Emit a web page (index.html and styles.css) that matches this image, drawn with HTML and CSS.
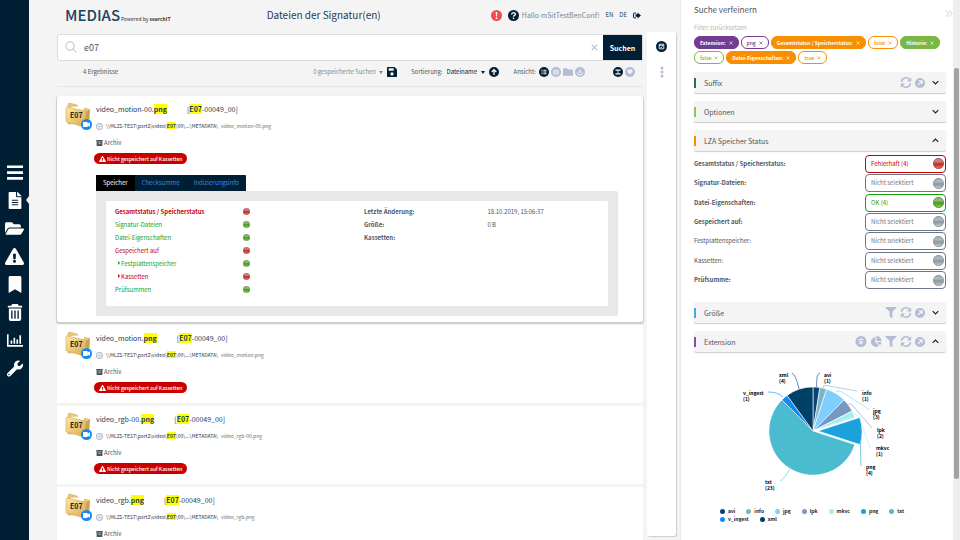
FILE: index.html
```html
<!DOCTYPE html>
<html lang="de">
<head>
  <meta charset="UTF-8" />
  <title>MEDIAS | Dateien der Signatur(en)</title>
  <meta name="viewport" content="width=device-width, initial-scale=1.0" />
  <link rel="stylesheet" href="styles.css">
</head>
<body>

  <!-- icon sprite -->
  <svg class="sprite" aria-hidden="true">
    <defs>
      <linearGradient id="folderFill" x1="0" y1="0" x2="1" y2="1">
        <stop offset="0" stop-color="#fbe8a6" /><stop offset="1" stop-color="#dba94a" />
      </linearGradient>
      <linearGradient id="redBall" x1="0" y1="0" x2="0" y2="1">
        <stop offset="0" stop-color="#c27a78" /><stop offset=".3" stop-color="#cf8080" /><stop offset=".55" stop-color="#bb2c28" /><stop offset="1" stop-color="#ee7a68" />
      </linearGradient>
      <linearGradient id="greenBall" x1="0" y1="0" x2="0" y2="1">
        <stop offset="0" stop-color="#7fa870" /><stop offset=".3" stop-color="#8fbf78" /><stop offset=".55" stop-color="#45981c" /><stop offset="1" stop-color="#86d850" />
      </linearGradient>
      <linearGradient id="greyBall" x1="0" y1="0" x2="0" y2="1">
        <stop offset="0" stop-color="#9aa4ab" /><stop offset=".3" stop-color="#b2bbc2" /><stop offset=".55" stop-color="#8b979f" /><stop offset="1" stop-color="#c2ccd4" />
      </linearGradient>
    </defs>
    <symbol id="bars" viewBox="0 0 16 16"><path d="M0 1h16v2.600H0zM0 6.800h16v2.600H0zM0 12.600h16v2.600H0z" /></symbol>
    <symbol id="file" viewBox="0 0 384 512"><path fill-rule="evenodd" d="M224 136V0H24C10.700 0 0 10.700 0 24v464c0 13.300 10.700 24 24 24h336c13.300 0 24-10.700 24-24V160H248c-13.200 0-24-10.800-24-24zM96 230h192v36H96zM96 298h192v36H96zM96 366h192v36H96zM384 122v6H256V0h6c6 0 12 2 17 7l98 98c4 4 7 11 7 17z" /></symbol>
    <symbol id="folderOpen" viewBox="0 0 576 512"><path d="M573 292l-73 124a64 64 0 0 1-55 32H45c-19 0-30-20-21-36l73-124a64 64 0 0 1 55-32h400c19 0 30 20 21 36zM152 224h328v-48c0-26-21-48-48-48H272l-64-64H48C21 64 0 85 0 112v278l69-118c17-30 49-48 83-48z" /></symbol>
    <symbol id="warning" viewBox="0 0 576 512"><path d="M569.500 440C588 472 565 512 528 512H48c-37 0-60-40-41.500-72L246.400 24c18.500-32 64.700-32 83.200 0zM288 354a46 46 0 1 0 0 92 46 46 0 0 0 0-92zm-43.700-165.300l7.400 136c.4 6.300 5.700 11.300 12 11.300h48.600c6.300 0 11.600-5 12-11.300l7.400-136c.4-6.900-5-12.700-12-12.700h-63.400c-6.900 0-12.300 5.800-12 12.700z" /></symbol>
    <symbol id="bookmark" viewBox="0 0 384 512"><path d="M0 512V48C0 21 21 0 48 0h288c26 0 48 21 48 48v464L192 400z" /></symbol>
    <symbol id="trash" viewBox="0 0 16 18"><path fill-rule="evenodd" d="M5 0h6l1 1.800h3.600v2H.4v-2H4zM1.500 4.800h13V16a2 2 0 0 1-2 2h-9a2 2 0 0 1-2-2zM4 7v8.500h1.400V7zm3.300 0v8.500h1.400V7zm3.300 0v8.500H12V7z" /></symbol>
    <symbol id="chart" viewBox="0 0 18 14"><path d="M0 0h1.800v12H18v1.900H0zM4 7h1.900v3.700H4zM7.300 4h1.900v6.700H7.300zM10.600 6h1.900v4.700h-1.900zM13.900 1h1.900v9.700h-1.900z" /></symbol>
    <symbol id="wrench" viewBox="0 0 512 512"><path d="M507.700 109c-2.200-9-13.500-12-20-5.500L413.300 178l-68-11.300-11.300-68 74.400-74.300c6.600-6.600 3.400-18-5.700-20.200-47.400-11.700-99.500 1-136.600 38-39.600 39.600-50.500 97-34 147.200L18.700 402.800a64 64 0 0 0 90.500 90.500L322.500 280c50 16.700 107.400 5.700 147.300-34.200 37-37 49.700-89.300 37.900-136.800zM64 472a24 24 0 1 1 0-48 24 24 0 0 1 0 48z" /></symbol>
    <symbol id="filter" viewBox="0 0 512 512"><path d="M488 0H24C3 0-8 26 7 41l185 185v206c0 8 4 15 10 20l80 56c16 11 38 0 38-20V226L505 41c15-15 4-41-17-41z" /></symbol>
    <symbol id="sync" viewBox="0 0 16 16"><path d="M1.400 7A6.700 6.700 0 0 1 12.800 3.200M14.600 9A6.700 6.700 0 0 1 3.200 12.800" fill="none" stroke="currentColor" stroke-width="2.200" /><path d="M15.500.5v6.200H9.300zM.5 15.500V9.300h6.200z" /></symbol>
    <symbol id="open" viewBox="0 0 16 16"><circle cx="8" cy="8" r="8" /><path d="M4.800 11.200L11 5M6 4.700h5.300V10" fill="none" stroke="#f4f4f4" stroke-width="2" /></symbol>
    <symbol id="down" viewBox="0 0 10 6"><path d="M1 1l4 4 4-4" fill="none" stroke="currentColor" stroke-width="1.500" /></symbol>
    <symbol id="up" viewBox="0 0 10 6"><path d="M1 5l4-4 4 4" fill="none" stroke="currentColor" stroke-width="1.500" /></symbol>
    <symbol id="pie" viewBox="0 0 16 16"><path d="M7 1.500V9l5.300 5.300A7.200 7.200 0 1 1 7 1.500zM8.700 0A7.300 7.300 0 0 1 16 7.300H8.700zM9 8.800h7a7.200 7.200 0 0 1-2.200 4.700z" /></symbol>
    <symbol id="bin" viewBox="0 0 16 16"><circle cx="8" cy="8" r="8" /><path d="M4 5.200h8M6.500 4h3" fill="none" stroke="#f4f4f4" stroke-width="1.200" /><path d="M4.800 6.800h6.400l-.6 5.200H5.400z" fill="#f4f4f4" opacity=".7" /></symbol>
    <symbol id="search" viewBox="0 0 12 12"><circle cx="5" cy="5" r="4.200" fill="none" stroke="currentColor" /><path d="M8 8l3.500 3.500" stroke="currentColor" /></symbol>
    <symbol id="close" viewBox="0 0 10 10"><path d="M1 1l8 8M9 1L1 9" fill="none" stroke="currentColor" stroke-width="1.500" /></symbol>
    <symbol id="alert" viewBox="0 0 12 12"><circle cx="6" cy="6" r="6" fill="#ef4b55" /><path d="M5.100 2.300h1.800l-.3 4.700H5.400z" fill="#fff" /><circle cx="6" cy="8.900" r="1" fill="#fff" /></symbol>
    <symbol id="help" viewBox="0 0 12 12"><circle cx="6" cy="6" r="6" /><path d="M4 4.800C4 2.300 8 2.300 8 4.600 8 6 6 6 6 7.300" fill="none" stroke="#fff" stroke-width="1.500" /><circle cx="6" cy="9.100" r=".9" fill="#fff" /></symbol>
    <symbol id="logout" viewBox="0 0 16 12"><path d="M9 0l7 6-7 6V8.500H5v-5h4z" /><path d="M6 1.200H2.500Q1 1.200 1 2.700v6.600q0 1.500 1.500 1.500H6" fill="none" stroke="currentColor" stroke-width="2" /></symbol>
    <symbol id="save" viewBox="0 0 12 12"><path fill-rule="evenodd" d="M1 0h8l3 3v8q0 1-1 1H1q-1 0-1-1V1q0-1 1-1zm1 1.500v3h6v-3zM6 6.300a2 2 0 1 0 0 4 2 2 0 0 0 0-4z" /></symbol>
    <symbol id="arrowUp" viewBox="0 0 12 12"><circle cx="6" cy="6" r="6" /><path d="M6 9.500V3.500M3.200 6L6 3.200 8.800 6" fill="none" stroke="#fff" stroke-width="1.500" /></symbol>
    <symbol id="list" viewBox="0 0 12 12"><circle cx="6" cy="6" r="6" /><path d="M3 3.900h1.300M5.300 3.900H9M3 6h1.300M5.300 6H9M3 8.100h1.300M5.300 8.100H9" stroke="#f4f4f4" stroke-width="1.200" /></symbol>
    <symbol id="grid" viewBox="0 0 12 12"><circle cx="6" cy="6" r="6" /><path d="M3 3.500h6v5H3zM3 6h6M5 3.500v5M7 3.500v5" fill="none" stroke="#f4f4f4" stroke-width=".8" /></symbol>
    <symbol id="folder" viewBox="0 0 12 9"><path d="M1 0h3.500L6 1.500h5q1 0 1 1V8q0 1-1 1H1Q0 9 0 8V1q0-1 1-1z" /></symbol>
    <symbol id="download" viewBox="0 0 12 12"><circle cx="6" cy="6" r="6" /><path d="M6 2.500v4M4.200 5L6 6.800 7.800 5M2.800 6.500a3.200 3.200 0 0 0 6.400 0" fill="none" stroke="#f4f4f4" stroke-width="1.200" /></symbol>
    <symbol id="hourglass" viewBox="0 0 12 12"><circle cx="6" cy="6" r="6" /><path d="M3 3h6v1.500H3zM3 7.500h6V9H3zM5 5.300h2v1.400H5z" fill="#fff" /></symbol>
    <symbol id="shield" viewBox="0 0 12 12"><circle cx="6" cy="6" r="6" /><path d="M3 3h6v3.500H8L6 9 4 6.500H3z" fill="#f4f4f4" /></symbol>
    <symbol id="calendar" viewBox="0 0 12 12"><circle cx="6" cy="6" r="6" /><path d="M3.500 3.500h5v5h-5zM3.500 4.700h5M4.800 6.500l.9.9 1.500-1.500" fill="none" stroke="#fff" stroke-width=".9" /></symbol>
    <symbol id="dots" viewBox="0 0 4 12"><circle cx="2" cy="2" r="1.500" /><circle cx="2" cy="6" r="1.500" /><circle cx="2" cy="10" r="1.500" /></symbol>
    <symbol id="goto" viewBox="0 0 12 12"><circle cx="6" cy="6" r="5" fill="none" stroke="currentColor" stroke-width="1.900" /><path d="M3 6h5M6 3.800L8.200 6 6 8.200" fill="none" stroke="currentColor" stroke-width="1.600" /></symbol>
    <symbol id="archive" viewBox="0 0 12 11"><path d="M0 0h12v3H0zM.7 3.700h10.600V11H.7zM4 5v1.200h4V5z" fill-rule="evenodd" /></symbol>
    <symbol id="collapse" viewBox="0 0 10 8"><path d="M1 0l4 4-4 4M5 0l4 4-4 4" fill="none" stroke="currentColor" /></symbol>
    <symbol id="signature" viewBox="0 0 28 30">
      <path d="M3 3l1-2 8 2 1 2 10 2q1 0 1 1v13L3 22z" fill="#e8c878" stroke="#cfa75a" stroke-width=".6" />
      <path d="M6 5l13-1v4L6 9z" fill="#fff" />
      <path d="M1 6q0-1 1-1l18 4q1 0 1 1l-1 14q0 1-1 1L2 20q-1 0-1-1z" fill="url(#folderFill)" stroke="#d3aa58" stroke-width=".6" />
      <path d="M21 10l4-3-1 13-4 4z" fill="#d0a050" />
      <circle cx="21.500" cy="22.500" r="5.500" fill="#1687f5" />
      <path d="M18 20h4.600v1.600l2.400-1.400v4.600l-2.400-1.400V25H18z" fill="#fff" />
    </symbol>
    <symbol id="red" viewBox="0 0 10 10"><circle cx="5" cy="5" r="4.700" fill="url(#redBall)" stroke="#8f3a3a" stroke-width=".6" /></symbol>
    <symbol id="green" viewBox="0 0 10 10"><circle cx="5" cy="5" r="4.700" fill="url(#greenBall)" stroke="#4d7a3a" stroke-width=".6" /></symbol>
    <symbol id="grey" viewBox="0 0 10 10"><circle cx="5" cy="5" r="4.700" fill="url(#greyBall)" stroke="#78838b" stroke-width=".6" /></symbol>
  </svg>

  <nav class="sidebar">
    <a href="#" aria-label="Menü"><svg><use href="#bars" /></svg></a>
    <a href="#" class="current" aria-label="Dateien"><svg><use href="#file" /></svg></a>
    <a href="#" aria-label="Ordner"><svg class="wide"><use href="#folderOpen" /></svg></a>
    <a href="#" aria-label="Fehler"><svg class="wide"><use href="#warning" /></svg></a>
    <a href="#" aria-label="Lesezeichen"><svg><use href="#bookmark" /></svg></a>
    <a href="#" aria-label="Papierkorb"><svg><use href="#trash" /></svg></a>
    <a href="#" aria-label="Statistik"><svg><use href="#chart" /></svg></a>
    <a href="#" aria-label="Werkzeuge"><svg><use href="#wrench" /></svg></a>
  </nav>

  <main class="main">
    <header class="header">
      <div class="logo"><strong>MEDIAS</strong><small>Powered by <b>searchIT</b></small></div>
      <h1>Dateien der Signatur(en)</h1>
      <div class="user">
        <svg class="ic-lg"><use href="#alert" /></svg>
        <svg class="ic-lg dark"><use href="#help" /></svg>
        <span class="hello">Hallo mSitTestBenConf!</span>
        <a href="#">EN</a>
        <a href="#">DE</a>
        <a href="#" aria-label="Abmelden"><svg class="ic-out"><use href="#logout" /></svg></a>
      </div>
    </header>

    <div class="content">
      <div class="center">
        <form class="search">
          <svg class="ic-search"><use href="#search" /></svg>
          <input type="text" value="e07" aria-label="Suchbegriff" />
          <button type="button" class="clear" aria-label="Leeren"><svg><use href="#close" /></svg></button>
          <button type="button" class="submit">Suchen</button>
        </form>

        <div class="toolbar">
          <span class="count">4 Ergebnisse</span>
          <button type="button" class="saved">0 gespeicherte Suchen <i class="caret"></i></button>
          <button type="button" class="dark" aria-label="Speichern"><svg class="ic"><use href="#save" /></svg></button>
          <label class="sort-label" for="sort">Sortierung:</label>
          <select id="sort"><option>Dateiname</option></select><i class="caret dark"></i>
          <button type="button" class="dark sort-dir" aria-label="Aufsteigend"><svg class="ic"><use href="#arrowUp" /></svg></button>
          <span class="view-label">Ansicht:</span>
          <div class="views">
            <button type="button" class="dark" aria-label="Liste"><svg class="ic"><use href="#list" /></svg></button>
            <button type="button" aria-label="Tabelle"><svg class="ic"><use href="#grid" /></svg></button>
            <button type="button" aria-label="Ordner"><svg class="ic"><use href="#folder" /></svg></button>
            <button type="button" aria-label="Download"><svg class="ic"><use href="#download" /></svg></button>
          </div>
          <div class="views last">
            <button type="button" class="dark" aria-label="Wartend"><svg class="ic"><use href="#hourglass" /></svg></button>
            <button type="button" aria-label="Geschützt"><svg class="ic"><use href="#shield" /></svg></button>
          </div>
        </div>

        <div class="results">
          <article class="card open">
            <div class="thumb"><svg><use href="#signature" /></svg><span>E07</span></div>
            <div class="info">
              <h2><a href="#">video_motion-00.<mark>png</mark></a><a href="#">[<mark>E07</mark>-00049_00]</a></h2>
              <p class="path"><svg><use href="#goto" /></svg><a href="#">\\MLZS-TEST\part2\video\<mark>E07</mark>\00\...\METADATA\</a> video_motion-00.png</p>
              <p class="archive"><svg><use href="#archive" /></svg>Archiv</p>
              <span class="badge"><svg><use href="#warning" /></svg>Nicht gespeichert auf Kassetten</span>

              <div class="details">
                <div class="tabs">
                  <button type="button" class="active">Speicher</button>
                  <button type="button">Checksumme</button>
                  <button type="button">Indizierungsinfo</button>
                </div>
                <div class="frame">
                  <div class="panel">
                    <table class="states">
                      <tr class="bad bold"><td>Gesamtstatus / Speicherstatus</td><td><svg><use href="#red" /></svg></td></tr>
                      <tr class="good"><td>Signatur-Dateien</td><td><svg><use href="#green" /></svg></td></tr>
                      <tr class="good"><td>Datei-Eigenschaften</td><td><svg><use href="#green" /></svg></td></tr>
                      <tr class="bad"><td>Gespeichert auf</td><td><svg><use href="#red" /></svg></td></tr>
                      <tr class="good sub"><td>Festplattenspeicher</td><td><svg><use href="#green" /></svg></td></tr>
                      <tr class="bad sub"><td>Kassetten</td><td><svg><use href="#red" /></svg></td></tr>
                      <tr class="good"><td>Prüfsummen</td><td><svg><use href="#green" /></svg></td></tr>
                    </table>
                    <table class="facts">
                      <tr><th>Letzte Änderung:</th><td>18.10.2019, 15:06:37</td></tr>
                      <tr><th>Größe:</th><td>0 B</td></tr>
                      <tr><th>Kassetten:</th><td></td></tr>
                    </table>
                  </div>
                </div>
              </div>
            </div>
          </article>

          <article class="card">
            <div class="thumb"><svg><use href="#signature" /></svg><span>E07</span></div>
            <div class="info">
              <h2><a href="#">video_motion.<mark>png</mark></a><a href="#">[<mark>E07</mark>-00049_00]</a></h2>
              <p class="path"><svg><use href="#goto" /></svg><a href="#">\\MLZS-TEST\part2\video\<mark>E07</mark>\00\...\METADATA\</a> video_motion.png</p>
              <p class="archive"><svg><use href="#archive" /></svg>Archiv</p>
              <span class="badge"><svg><use href="#warning" /></svg>Nicht gespeichert auf Kassetten</span>
            </div>
          </article>

          <article class="card">
            <div class="thumb"><svg><use href="#signature" /></svg><span>E07</span></div>
            <div class="info">
              <h2><a href="#">video_rgb-00.<mark>png</mark></a><a href="#">[<mark>E07</mark>-00049_00]</a></h2>
              <p class="path"><svg><use href="#goto" /></svg><a href="#">\\MLZS-TEST\part2\video\<mark>E07</mark>\00\...\METADATA\</a> video_rgb-00.png</p>
              <p class="archive"><svg><use href="#archive" /></svg>Archiv</p>
              <span class="badge"><svg><use href="#warning" /></svg>Nicht gespeichert auf Kassetten</span>
            </div>
          </article>

          <article class="card">
            <div class="thumb"><svg><use href="#signature" /></svg><span>E07</span></div>
            <div class="info">
              <h2><a href="#">video_rgb.<mark>png</mark></a><a href="#">[<mark>E07</mark>-00049_00]</a></h2>
              <p class="path"><svg><use href="#goto" /></svg><a href="#">\\MLZS-TEST\part2\video\<mark>E07</mark>\00\...\METADATA\</a> video_rgb.png</p>
              <p class="archive"><svg><use href="#archive" /></svg>Archiv</p>
            </div>
          </article>
        </div>
      </div>

      <div class="strip">
        <button type="button" class="dark" aria-label="Auswahl"><svg class="ic-lg"><use href="#calendar" /></svg></button>
        <button type="button" aria-label="Mehr"><svg class="ic-dots"><use href="#dots" /></svg></button>
      </div>
    </div>
  </main>

  <aside class="refine">
    <div class="refine-body">
      <div class="refine-head">
        <h2>Suche verfeinern</h2>
        <button type="button" aria-label="Einklappen"><svg><use href="#collapse" /></svg></button>
      </div>
      <a href="#" class="reset">Filter zurücksetzen</a>
      <div class="chips">
        <button type="button" class="chip purple full">Extension: <svg><use href="#close" /></svg></button>
        <button type="button" class="chip purple">png <svg><use href="#close" /></svg></button>
        <button type="button" class="chip orange full">Gesamtstatus / Speicherstatus: <svg><use href="#close" /></svg></button>
        <button type="button" class="chip orange">false <svg><use href="#close" /></svg></button>
        <button type="button" class="chip green full">Historie: <svg><use href="#close" /></svg></button>
        <button type="button" class="chip green">false <svg><use href="#close" /></svg></button>
        <button type="button" class="chip orange full">Datei-Eigenschaften: <svg><use href="#close" /></svg></button>
        <button type="button" class="chip orange">true <svg><use href="#close" /></svg></button>
      </div>

      <section class="facet suffix">
        <h3>Suffix</h3>
        <svg><use href="#sync" /></svg><svg class="small"><use href="#open" /></svg><svg class="arrow"><use href="#down" /></svg>
      </section>
      <section class="facet options">
        <h3>Optionen</h3>
        <svg class="arrow"><use href="#down" /></svg>
      </section>
      <section class="facet lza">
        <h3>LZA Speicher Status</h3>
        <svg class="arrow"><use href="#up" /></svg>
      </section>

      <div class="status-list">
        <div class="row"><label for="s1" class="bold">Gesamtstatus / Speicherstatus:</label><button type="button" id="s1" class="bad">Fehlerhaft (4)<svg><use href="#red" /></svg></button></div>
        <div class="row"><label for="s2" class="bold">Signatur-Dateien:</label><button type="button" id="s2">Nicht selektiert<svg><use href="#grey" /></svg></button></div>
        <div class="row"><label for="s3" class="bold">Datei-Eigenschaften:</label><button type="button" id="s3" class="good">OK (4)<svg><use href="#green" /></svg></button></div>
        <div class="row"><label for="s4" class="bold">Gespeichert auf:</label><button type="button" id="s4">Nicht selektiert<svg><use href="#grey" /></svg></button></div>
        <div class="row"><label for="s5">Festplattenspeicher:</label><button type="button" id="s5">Nicht selektiert<svg><use href="#grey" /></svg></button></div>
        <div class="row"><label for="s6">Kassetten:</label><button type="button" id="s6">Nicht selektiert<svg><use href="#grey" /></svg></button></div>
        <div class="row"><label for="s7" class="bold">Prüfsumme:</label><button type="button" id="s7">Nicht selektiert<svg><use href="#grey" /></svg></button></div>
      </div>

      <section class="facet size">
        <h3>Größe</h3>
        <svg><use href="#filter" /></svg><svg><use href="#sync" /></svg><svg class="small"><use href="#open" /></svg><svg class="arrow"><use href="#down" /></svg>
      </section>
      <section class="facet extension">
        <h3>Extension</h3>
        <svg><use href="#bin" /></svg><svg><use href="#pie" /></svg><svg><use href="#filter" /></svg><svg><use href="#sync" /></svg><svg class="small"><use href="#open" /></svg><svg class="arrow"><use href="#up" /></svg>
      </section>

      <svg class="pie-chart" viewBox="0 0 252 136" role="img" aria-label="Dateien nach Extension">
        <g class="slices" transform="translate(119 70)">
          <path fill="#0a4173" d="M0 0V-44A44 44 0 0 1 6.900-43.500z" />
          <path fill="#7ab5c3" d="M0 0L6.900-43.500A44 44 0 0 1 13.600-41.800z" />
          <path fill="#80ceff" d="M0 0L13.600-41.800A44 44 0 0 1 31.100-31.100z" />
          <path fill="#7898c0" d="M0 0L31.100-31.100A44 44 0 0 1 39.200-20z" />
          <path fill="#a6eeee" d="M0 0L39.200-20A44 44 0 0 1 41.800-13.600z" />
          <path fill="#1ba1dc" d="M5 0L46.800-13.600A44 44 0 0 1 46.800 13.600z" />
          <path fill="#4bbbcf" d="M0 0L41.800 13.600A44 44 0 1 1-31.100-31.100z" />
          <path fill="#0d8bf8" d="M0 0L-31.100-31.100A44 44 0 0 1-25.900-35.600z" />
          <path fill="#003f66" d="M0 0L-25.900-35.600A44 44 0 0 1 0-44z" />
        </g>
        <g class="leaders">
          <path stroke="#0a4173" d="M122.500 26C123 20 122 13 126 12" />
          <path stroke="#7ab5c3" d="M129 27Q129 24 132 24.500L163 30" />
          <path stroke="#80ceff" d="M142 31Q145 29 148 31L176 49" />
          <path stroke="#7898c0" d="M154.500 43Q157 42 159 45L178 67" />
          <path stroke="#a6eeee" d="M160 53Q164 53 166 58Q172 76 176 87" />
          <path stroke="#1ba1dc" d="M167 70Q166 90 167 105" />
          <path stroke="#4bbbcf" d="M96 108Q90 118 86 120" />
          <path stroke="#0d8bf8" d="M89 36Q84 31 74 31" />
          <path stroke="#003f66" d="M105 28Q102 14 98 12" />
        </g>
        <g class="labels">
          <text x="130" y="16">avi<tspan x="130" dy="6">(1)</tspan></text>
          <text x="168" y="34">info<tspan x="168" dy="6">(1)</tspan></text>
          <text x="179" y="52">jpg<tspan x="179" dy="6">(3)</tspan></text>
          <text x="183" y="71">lpk<tspan x="183" dy="6">(2)</tspan></text>
          <text x="182" y="89">mkvc<tspan x="182" dy="6">(1)</tspan></text>
          <text x="172" y="108">png<tspan x="172" dy="6">(4)</tspan></text>
          <text x="71" y="123">txt<tspan x="71" dy="6">(23)</tspan></text>
          <text x="49" y="34">v_ingest<tspan x="49" dy="6">(1)</tspan></text>
          <text x="85" y="16">xml<tspan x="85" dy="6">(4)</tspan></text>
        </g>
      </svg>

      <ul class="legend">
        <li class="avi">avi</li>
        <li class="info-type">info</li>
        <li class="jpg">jpg</li>
        <li class="lpk">lpk</li>
        <li class="mkvc">mkvc</li>
        <li class="png">png</li>
        <li class="txt">txt</li>
        <li class="v_ingest">v_ingest</li>
        <li class="xml">xml</li>
      </ul>
    </div>
    <div class="scrollbar"><div class="thumb-bar"></div></div>
  </aside>

</body>
</html>
```

FILE: styles.css
```css
* { box-sizing: border-box; }
body {
  margin: 0;
  height: 100vh;
  display: flex;
  overflow: hidden;
  background: #f4f4f4;
  color: #4c565e;
  font-family: "Noto Sans CJK SC", "Noto Sans", sans-serif;
  font-size: 6px;
  line-height: 10px;
}
h1, h2, h3, p, ul { margin: 0; padding: 0; font-weight: normal; }
a { color: #1d3c54; text-decoration: none; }
button, input, select {
  margin: 0;
  padding: 0;
  border: 0;
  background: none;
  color: inherit;
  font: inherit;
}
svg { display: block; flex: none; fill: currentColor; }
.sprite { position: absolute; width: 0; height: 0; }
mark { background: #ffff00; color: #1d3c54; font-weight: bold; }
.dark { color: #001e34; }
.bold { font-weight: bold; }

/* left navigation */
.sidebar {
  flex: none;
  width: 29px;
  padding-top: 162px;
  background: #001e34;
}
.sidebar a {
  display: flex;
  align-items: center;
  justify-content: center;
  height: 20px;
  margin-bottom: 8px;
  color: #fff;
  position: relative;
}
.sidebar svg { width: 16px; height: 17px; }
.sidebar svg.wide { width: 19px; }
.sidebar .current::after {
  content: "";
  position: absolute;
  right: 0;
  top: 6px;
  border: 4px solid transparent;
  border-left: 0;
  border-right: 3px solid #f4f4f4;
}

.main {
  flex: 1;
  min-width: 0;
  display: flex;
  flex-direction: column;
  padding: 0 4px 4px 28px;
  border-right: 1px solid #ececec;
}
.header {
  display: flex;
  align-items: center;
  justify-content: space-between;
  height: 32px;
  flex: none;
  padding: 0 35px 2px 8px;
}
.logo { display: flex; align-items: baseline; color: #1d4160; }
.logo strong { font-size: 15px; line-height: 24px; font-weight: 500; }
.logo small { font-size: 5px; margin-left: 1px; color: #333; }
.header h1 { padding-right: 14px; font-size: 10px; line-height: 16px; color: #1d3c54; }
.user { display: flex; align-items: center; gap: 6px; }
.user .ic-lg + .hello { margin-left: -3px; }
.hello { font-size: 7px; color: #7c858c; }
.ic-lg { width: 11px; height: 11px; }
.ic-out { width: 8px; height: 7px; color: #001e34; }

.content { flex: 1; min-height: 0; display: flex; gap: 4px; }
.center { flex: 1; min-width: 0; }
.strip {
  flex: none;
  width: 29px;
  padding-top: 9px;
  display: flex;
  flex-direction: column;
  align-items: center;
  gap: 14px;
  background: #fff;
  border-radius: 2px;
  box-shadow: 1px 1px 1px #ccc;
  color: #b3bcd3;
}
.ic-dots { width: 4px; height: 12px; }

.search {
  display: flex;
  align-items: stretch;
  height: 27px;
  margin-top: 2px;
  background: #fff;
  border: 1px solid #dcdcdc;
  border-radius: 2px;
}
.search input { flex: 1; min-width: 0; font-size: 9px; outline: 0; }
.ic-search { width: 12px; height: 12px; margin: 6px 7px; color: #b3bcd3; }
.clear { width: 17px; color: #b3bcd3; }
.clear svg { width: 7px; height: 7px; margin: auto; }
.submit { width: 39px; background: #001e34; color: #fff; font-size: 7px; font-weight: bold; }

.toolbar {
  display: flex;
  align-items: center;
  height: 26px;
  padding: 0 8px 3px 26px;
  border-bottom: 1px solid #e6e6e6;
}
.count { flex: 1; }
.ic { width: 10px; height: 10px; }
.saved { color: #7c8b99; margin-right: 4px; display: flex; align-items: center; }
.caret {
  display: inline-block;
  margin-left: 3px;
  border: 2px solid transparent;
  border-top: 3px solid currentColor;
  border-bottom: 0;
}
.sort-label { margin: 0 4px 0 14px; }
.toolbar select { appearance: none; color: #001e34; }
.sort-dir { margin-left: 4px; }
.view-label { margin: 0 3px 0 15px; }
.views { display: flex; gap: 2px; color: #b3bcd3; }
.views.last { margin-left: 28px; }

/* search results */
.results { display: flex; flex-direction: column; gap: 3px; margin-top: 9px; }
.card {
  display: flex;
  min-height: 78px;
  padding: 6px 25px 7px 8px;
  background: #fff;
  border-radius: 2px;
}
.card.open { padding-bottom: 6px; box-shadow: 0 1px 1px 1px #ccc; }
.thumb { position: relative; flex: none; width: 31px; }
.thumb svg { width: 28px; height: 30px; }
.thumb span {
  position: absolute;
  left: 5px;
  top: 8px;
  font-size: 7px;
  font-weight: bold;
  color: #222;
}
.info { flex: 1; min-width: 0; }
.info h2 { display: flex; gap: 20px; font-size: 7px; line-height: 10px; padding: 2px 0; }
.path { display: flex; align-items: center; height: 10px; margin-top: 5px; gap: 3px; color: #6c757c; font-size: 5px; }
.path svg { width: 7px; height: 7px; color: #b3bcd3; }
.archive { display: flex; align-items: center; gap: 1px; margin-top: 7px; }
.archive svg { width: 7px; height: 6px; }
.badge {
  display: inline-flex;
  align-items: center;
  gap: 1px;
  height: 11px;
  margin: 5px 0 0 -2px;
  padding: 0 5px;
  border-radius: 6px;
  background: #c80000;
  color: #fff;
  font-size: 5px;
  font-weight: 500;
  vertical-align: top;
}
.badge svg { width: 7px; height: 6px; }

.details { margin-top: 11px; }
.tabs { display: inline-flex; background: #001e34; color: #3c86e0; border-radius: 1px 1px 0 0; vertical-align: top; }
.tabs button { height: 16px; padding: 0 7px; }
.tabs .active { background: #000; color: #fff; }
.frame { padding: 10px; background: #e8e8e8; border-radius: 0 2px 2px 2px; }
.panel {
  display: grid;
  grid-template-columns: 1fr 1fr;
  align-items: start;
  padding: 4px 9px 10px;
  background: #fff;
  border-radius: 1px;
}
.panel table { border-collapse: collapse; width: 100%; }
.panel td, .panel th { height: 13px; padding: 0; text-align: left; line-height: 10px; }
.panel svg { width: 7px; height: 7px; }
.states td:first-child { width: 53%; }
.facts { margin-left: 7px; }
.facts th { width: 51%; }
.bad { color: #c80000; }
.good { color: #16a016; }
.sub td:first-child::before {
  content: "";
  display: inline-block;
  margin: 0 1px 1px 3px;
  border: 2px solid transparent;
  border-left: 2px solid currentColor;
  border-right: 0;
}

/* right column */
.refine { flex: none; width: 279px; display: flex; background: #fff; }
.refine-body { flex: 1; min-width: 0; padding: 5px 7px 0 13px; }
.refine-head { display: flex; justify-content: space-between; align-items: flex-start; height: 10px; }
.refine-head h2 { font-size: 8px; }
.refine-head button { margin: 5px -7px 0 0; color: #b3bcd3; }
.refine-head svg { width: 8px; height: 7px; }
.reset { display: block; margin-top: 8px; color: #b4b4b4; }
.chips { display: flex; flex-wrap: wrap; gap: 2px; margin-top: 3px; }
.chip {
  display: flex;
  align-items: center;
  gap: 3px;
  height: 13px;
  padding: 0 5px;
  border: 1px solid currentColor;
  border-radius: 6px;
  font-size: 5px;
  font-weight: 500;
}
.chip svg { width: 4px; height: 4px; }
.chip.purple { color: #743b92; }
.chip.orange { color: #f78f00; }
.chip.green { color: #7ab845; }
.chip.full { color: #fff; font-weight: bold; }
.chip.full.purple { background: #743b92; border-color: #743b92; }
.chip.full.orange { background: #f78f00; border-color: #f78f00; }
.chip.full.green { background: #7ab845; border-color: #7ab845; }

.facet {
  display: flex;
  align-items: center;
  gap: 3px;
  height: 21px;
  margin-top: 8px;
  padding-right: 7px;
  background: #f4f4f4;
  border-radius: 2px;
  box-shadow: 0 1px 1px #ccc;
  color: #b3bcd3;
}
.facet h3 { flex: 1; font-size: 7px; color: #4c565e; }
.facet::before { content: ""; width: 2px; height: 10px; margin-right: 5px; background: #1d7a46; }
.facet svg { width: 12px; height: 11px; }
.facet svg.small { width: 10px; height: 10px; }
.facet svg.arrow { width: 7px; height: 5px; margin-left: 4px; color: #001e34; }
.facet.options::before { background: #8cc751; }
.facet.lza::before { background: #f78f00; }
.facet.size::before { background: #4aa8dc; }
.facet.extension::before { background: #8a4bab; }

.status-list { display: grid; grid-auto-rows: 1fr; min-height: 136px; margin: 3px 0 12px; }
.row { display: flex; justify-content: space-between; align-items: center; }
.row button {
  display: flex;
  align-items: center;
  justify-content: space-between;
  width: 81px;
  height: 18px;
  padding: 0 1px 0 5px;
  border: 1px solid #6c7888;
  border-radius: 4px;
  color: #6c7888;
}
.row button svg { width: 11px; height: 11px; }
.row button.bad { border-color: #c80000; color: #c80000; }
.row button.good { border-color: #16a016; color: #16a016; }

.pie-chart { width: 100%; margin-top: 9px; }
.slices path { stroke: #fff; stroke-width: .6; }
.leaders path { fill: none; stroke-width: .6; }
.labels text { fill: #000; font-size: 5px; font-weight: bold; }
.legend {
  display: flex;
  flex-wrap: wrap;
  padding: 0 36px 0 26px;
  margin-top: 10px;
  list-style: none;
  color: #222;
  font-size: 5px;
  font-weight: bold;
  line-height: 8px;
  column-gap: 11px;
}
.legend li { display: flex; align-items: center; gap: 3px; }
.legend li::before {
  content: "";
  width: 5px;
  height: 5px;
  border-radius: 50%;
  background: #0a4173;
}
.legend .info-type::before { background: #7ab5c3; }
.legend .jpg::before { background: #80ceff; }
.legend .lpk::before { background: #7898c0; }
.legend .mkvc::before { background: #a6eeee; }
.legend .png::before { background: #1ba1dc; }
.legend .txt::before { background: #4bbbcf; }
.legend .v_ingest::before { background: #0d8bf8; }
.legend .xml::before { background: #003f66; }

.scrollbar { flex: none; width: 7px; padding: 68px 1px 0; background: #eee; }
.thumb-bar { height: 411px; background: #a3a3a3; border-radius: 2px; }
```
